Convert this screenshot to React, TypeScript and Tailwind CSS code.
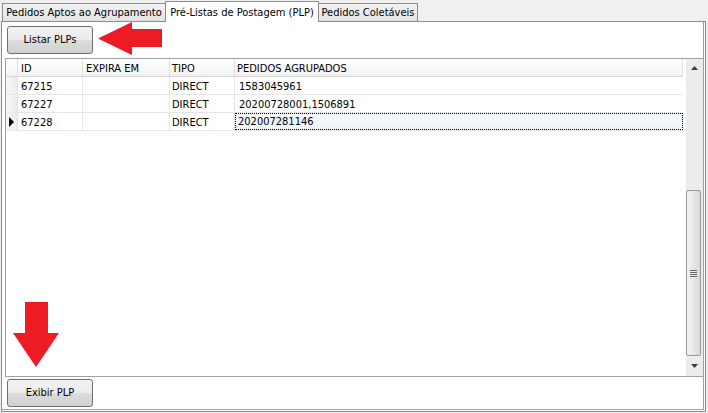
import { ReactNode } from 'react';

const rows = [
  { id: '67215', expira: '', tipo: 'DIRECT', pedidos: '1583045961' },
  { id: '67227', expira: '', tipo: 'DIRECT', pedidos: '20200728001,1506891' },
  { id: '67228', expira: '', tipo: 'DIRECT', pedidos: '202007281146', current: true },
];

function WinButton({ children }: { children: ReactNode }) {
  return (
    <button className="flex h-[28px] w-[86px] items-center justify-center rounded-[3px] border border-[#707070] bg-[linear-gradient(#f2f2f2_0%,#ebebeb_50%,#dddddd_51%,#cfcfcf_100%)] pt-px text-[11px] text-black">
      {children}
    </button>
  );
}

function Tab({ label, active, width }: { label: string; active?: boolean; width: string }) {
  return (
    <div
      className={
        active
          ? `relative z-10 -mb-px flex h-[21px] items-center justify-center border border-b-0 border-[#898c95] bg-white ${width}`
          : `flex h-[18px] items-center justify-center border border-b-0 border-[#898c95] bg-[linear-gradient(#f2f2f2,#e3e3e3)] ${width}`
      }
    >
      <span className="text-[11px] leading-none text-black">{label}</span>
    </div>
  );
}

export default function App() {
  return (
    <div className="relative h-[413px] w-[708px] overflow-hidden bg-[#f0f0f0] font-['DejaVu_Sans_Condensed','DejaVu_Sans',sans-serif] font-stretch-condensed text-black">
      {/* tab strip */}
      <div className="flex h-[21px] items-end pl-[2px]">
        <Tab label="Pedidos Aptos ao Agrupamento" width="w-[164px]" />
        <Tab label="Pré-Listas de Postagem (PLP)" width="w-[154px] -ml-px" active />
        <Tab label="Pedidos Coletáveis" width="w-[100px] -ml-px" />
      </div>

      {/* tab page */}
      <div className="ml-px flex h-[391px] w-[705px] flex-col border border-[#898c95] bg-white">
        <div className="flex h-[36px] w-[702px] items-start border-r border-[#a0a0a0] pl-[5px] pt-[4px]">
          <WinButton>Listar PLPs</WinButton>
        </div>

        {/* grid */}
        <div className="ml-[3px] flex h-[319px] w-[699px] border border-[#a0a0a0] bg-white text-[11px]">
          <div className="flex w-[680px] flex-col">
            <div className="flex h-[18px] border-b border-[#d5d5d5] bg-[linear-gradient(#ffffff,#f3f3f3)]">
              <div className="w-[12px] border-r border-[#e3e3e3]" />
              <div className="flex w-[65px] items-center border-r border-[#e3e3e3] pl-[3px] pt-[3px]">ID</div>
              <div className="flex w-[87px] items-center border-r border-[#e3e3e3] pl-[3px] pt-[3px]">EXPIRA EM</div>
              <div className="flex w-[65px] items-center border-r border-[#e3e3e3] pl-[2px] pt-[3px]">TIPO</div>
              <div className="flex w-[448px] items-center border-r border-[#e3e3e3] pl-[2px] pt-[3px]">PEDIDOS AGRUPADOS</div>
            </div>
            {rows.map((r) => (
              <div key={r.id} className="flex h-[18px] border-b border-[#e6e6e6]">
                <div className="flex w-[12px] items-center justify-center border-r border-[#e3e3e3] bg-[linear-gradient(90deg,#f7f7f7,#ececec)]">
                  {r.current && (
                    <svg width="6" height="10" viewBox="0 0 6 10">
                      <path d="M0 0 L5 5 L0 10 Z" fill="#000" />
                    </svg>
                  )}
                </div>
                <div className="flex w-[65px] items-center border-r border-[#e6e6e6] pl-[3px] pt-[3px]">{r.id}</div>
                <div className="flex w-[87px] items-center border-r border-[#e6e6e6] pl-[3px] pt-[3px]">{r.expira}</div>
                <div className="flex w-[65px] items-center border-r border-[#e6e6e6] pl-[2px] pt-[3px]">{r.tipo}</div>
                {r.current ? (
                  <div className="flex w-[448px] items-center border border-dotted border-black bg-[linear-gradient(#f7fbfe,#edf4fb)] pl-[2px] pt-[2px]">
                    {r.pedidos}
                  </div>
                ) : (
                  <div className="flex w-[448px] items-center pl-[4px] pt-[3px]">{r.pedidos}</div>
                )}
              </div>
            ))}
          </div>

          {/* vertical scrollbar */}
          <div className="ml-[3px] flex w-[17px] flex-col bg-[#ececec]">
            <div className="flex h-[17px] items-center justify-center">
              <svg width="7" height="4" viewBox="0 0 7 4">
                <path d="M0 4 L3.5 0 L7 4 Z" fill="#3c3c3c" />
              </svg>
            </div>
            <div className="h-[114px]" />
            <div className="flex h-[166px] w-[15px] items-center justify-center rounded-[2px] border border-[#979797] bg-[linear-gradient(90deg,#f3f3f3,#e8e8e8_50%,#d8d8d8)]">
              <div className="flex flex-col gap-px">
                <div className="h-px w-[7px] bg-[#6a6a6a]" />
                <div className="h-px w-[7px] bg-[#6a6a6a]" />
                <div className="h-px w-[7px] bg-[#6a6a6a]" />
                <div className="h-px w-[7px] bg-[#6a6a6a]" />
              </div>
            </div>
            <div className="flex flex-1 items-center justify-center">
              <svg width="7" height="4" viewBox="0 0 7 4">
                <path d="M0 0 L3.5 4 L7 0 Z" fill="#3c3c3c" />
              </svg>
            </div>
          </div>
        </div>

        <div className="flex h-[33px] w-[702px] items-start border-r border-b border-[#a0a0a0] pl-[5px] pt-[2px]">
          <WinButton>Exibir PLP</WinButton>
        </div>
      </div>

      {/* annotation arrows */}
      <svg className="absolute left-0 top-0" width="708" height="413" viewBox="0 0 708 413">
        <polygon points="98,38.5 132,22 132,29 162,29 162,47 132,47 132,55" fill="#ed1c24" />
        <polygon points="25,302 48,302 48,333 59,333 36,367 13,333 25,333" fill="#ed1c24" />
      </svg>
    </div>
  );
}
